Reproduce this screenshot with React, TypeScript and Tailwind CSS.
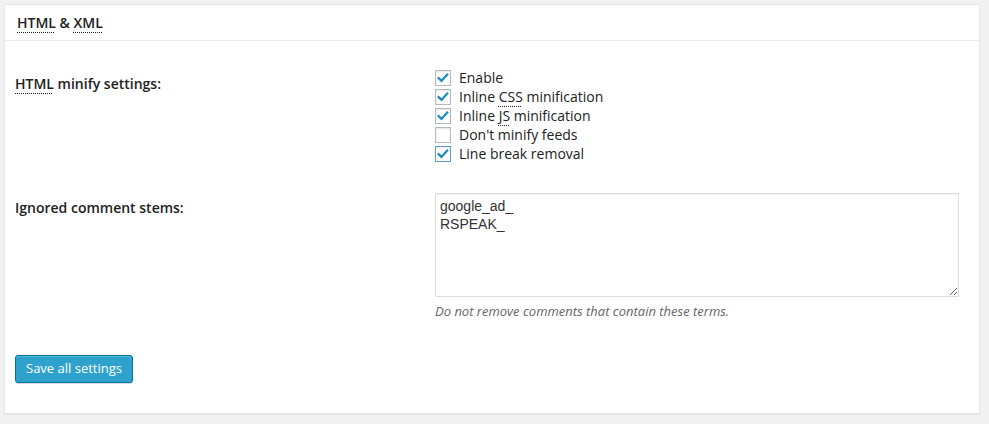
const OPTIONS: { label: React.ReactNode; checked: boolean; focus?: boolean }[] = [
  { label: 'Enable', checked: true },
  {
    label: (
      <>
        Inline <Abbr>CSS</Abbr> minification
      </>
    ),
    checked: true,
  },
  {
    label: (
      <>
        Inline <Abbr>JS</Abbr> minification
      </>
    ),
    checked: true,
  },
  { label: "Don't minify feeds", checked: false },
  { label: 'Line break removal', checked: true, focus: true },
]

function Abbr({ children }: { children: React.ReactNode }) {
  return <span className="underline decoration-dotted decoration-1 underline-offset-[4px]">{children}</span>
}

function Checkbox({ checked, focus }: { checked: boolean; focus?: boolean }) {
  return (
    <span
      className={
        'flex h-4 w-4 shrink-0 items-center justify-center bg-white shadow-[inset_0_1px_2px_rgba(0,0,0,0.1)] ' +
        (focus ? 'border border-[#5b9dd9] shadow-[0_0_2px_rgba(30,140,190,0.8)]' : 'border border-[#b4b9be]')
      }
    >
      {checked && (
        <svg viewBox="0 0 16 16" className="h-[14px] w-[14px]">
          <path d="M3 8.2 L6.3 11.3 L12.8 4" fill="none" stroke="#1e8cbe" strokeWidth={2.6} strokeLinecap="square" />
        </svg>
      )}
    </span>
  )
}

export default function App() {
  return (
    <div className="h-[424px] w-[989px] bg-[#f1f1f1] p-[4px] pr-[9px] font-['Open_Sans',sans-serif] text-[#222]">
      <div className="h-[410px] border border-[#e5e5e5] bg-white shadow-[0_1px_1px_rgba(0,0,0,0.04)]">
        <div className="flex h-[36px] items-center border-b border-[#eee] px-[12px] text-[14px] font-semibold">
          <span>
            <Abbr>HTML</Abbr> &amp; <Abbr>XML</Abbr>
          </span>
        </div>

        <div className="px-[10px]">
          <div className="grid grid-cols-[420px_1fr] pt-[27px]">
            <div className="pt-[6px] text-[14px] font-semibold leading-[20px]">
              <Abbr>HTML</Abbr> minify settings:
            </div>
            <div className="flex flex-col">
              {OPTIONS.map((o, i) => (
                <label key={i} className="flex h-[19px] items-center gap-[8px] text-[14px]">
                  <Checkbox checked={o.checked} focus={o.focus} />
                  <span>{o.label}</span>
                </label>
              ))}
            </div>
          </div>

          <div className="grid grid-cols-[420px_1fr] pt-[30px]">
            <div className="pt-[5px] text-[14px] font-semibold leading-[20px]">Ignored comment stems:</div>
            <div>
              <textarea
                className="block h-[104px] w-[524px] resize border border-[#ddd] px-[4px] py-[3px] font-['Liberation_Sans',Arial,sans-serif] text-[14px] leading-[18px] text-[#333] shadow-[inset_0_1px_2px_rgba(0,0,0,0.07)] outline-none"
                defaultValue={'google_ad_\nRSPEAK_'}
              />
              <p className="mt-[5px] text-[13px] italic leading-[19px] text-[#666]">
                Do not remove comments that contain these terms.
              </p>
            </div>
          </div>

          <div className="pt-[34px]">
            <button className="h-[28px] w-[118px] rounded-[3px] border border-[#0074a2] bg-[#2ea2cc] text-[13px] text-white shadow-[inset_0_1px_0_rgba(120,200,230,0.5),0_1px_0_rgba(0,0,0,0.15)]">
              Save all settings
            </button>
          </div>
        </div>
      </div>
    </div>
  )
}
